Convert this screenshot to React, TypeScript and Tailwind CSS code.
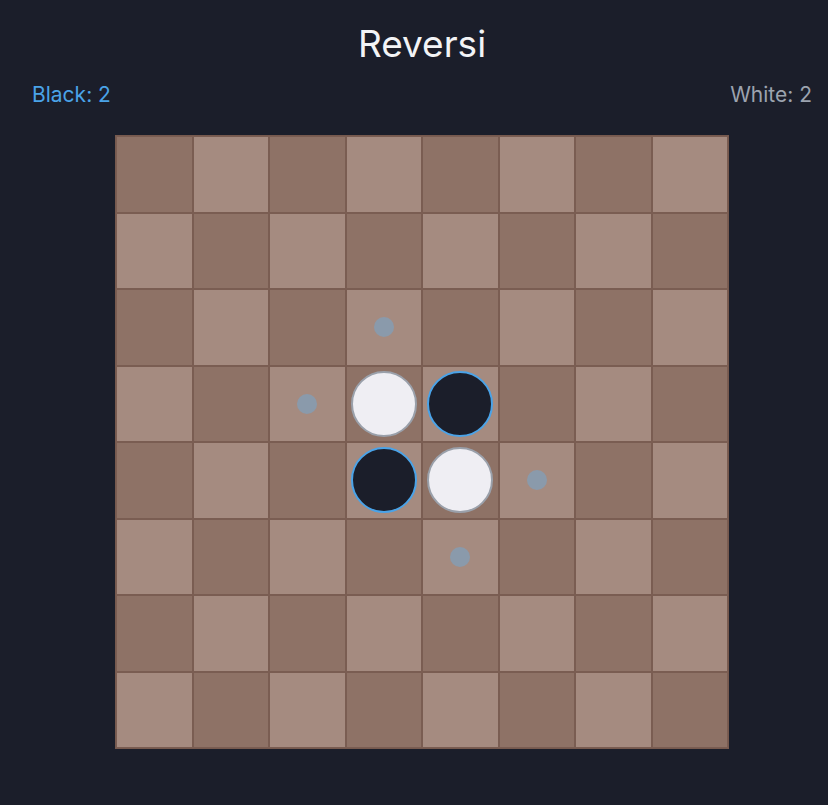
import React from "react";

type Disc = "b" | "w" | null;

const start: Disc[][] = Array.from({ length: 8 }, (_, r) =>
  Array.from({ length: 8 }, (_, c) => {
    if ((r === 3 && c === 3) || (r === 4 && c === 4)) return "w";
    if ((r === 3 && c === 4) || (r === 4 && c === 3)) return "b";
    return null;
  })
);

// legal moves for black at the opening
const hints = new Set(["2-3", "3-2", "4-5", "5-4"]);

export default function App() {
  return (
    <div
      className="min-h-[805px] w-full bg-[#1b1e2a] pl-8 pr-4 pt-[22px]"
      style={{ fontFamily: "Inter, 'Liberation Sans', sans-serif" }}
    >
      <h1 className="text-center text-[37px] leading-[44px] text-[#f3f4f6]">Reversi</h1>

      <div className="mt-[15px] flex items-center justify-between text-[21px] leading-[28px]">
        <span className="text-[#4aa3e8]">Black: 2</span>
        <span className="text-[#9ca3af]">White: 2</span>
      </div>

      <div className="mt-[26px] flex justify-center">
        <div className="grid h-[614px] w-[614px] grid-cols-8 grid-rows-8 border border-[#76594e]">
          {start.map((row, r) =>
            row.map((cell, c) => (
              <div
                key={`${r}-${c}`}
                className={`flex items-center justify-center border border-[#7a5d52] ${
                  (r + c) % 2 === 0 ? "bg-[#8e7266]" : "bg-[#a58b80]"
                }`}
              >
                {cell === "w" && (
                  <div className="h-[66px] w-[66px] rounded-full border-2 border-[#9aa0aa] bg-[#efeef3]" />
                )}
                {cell === "b" && (
                  <div className="h-[66px] w-[66px] rounded-full border-2 border-[#4aa3e8] bg-[#1b1e2a]" />
                )}
                {!cell && hints.has(`${r}-${c}`) && (
                  <div className="h-[20px] w-[20px] rounded-full bg-[#8a9aab]" />
                )}
              </div>
            ))
          )}
        </div>
      </div>
    </div>
  );
}
